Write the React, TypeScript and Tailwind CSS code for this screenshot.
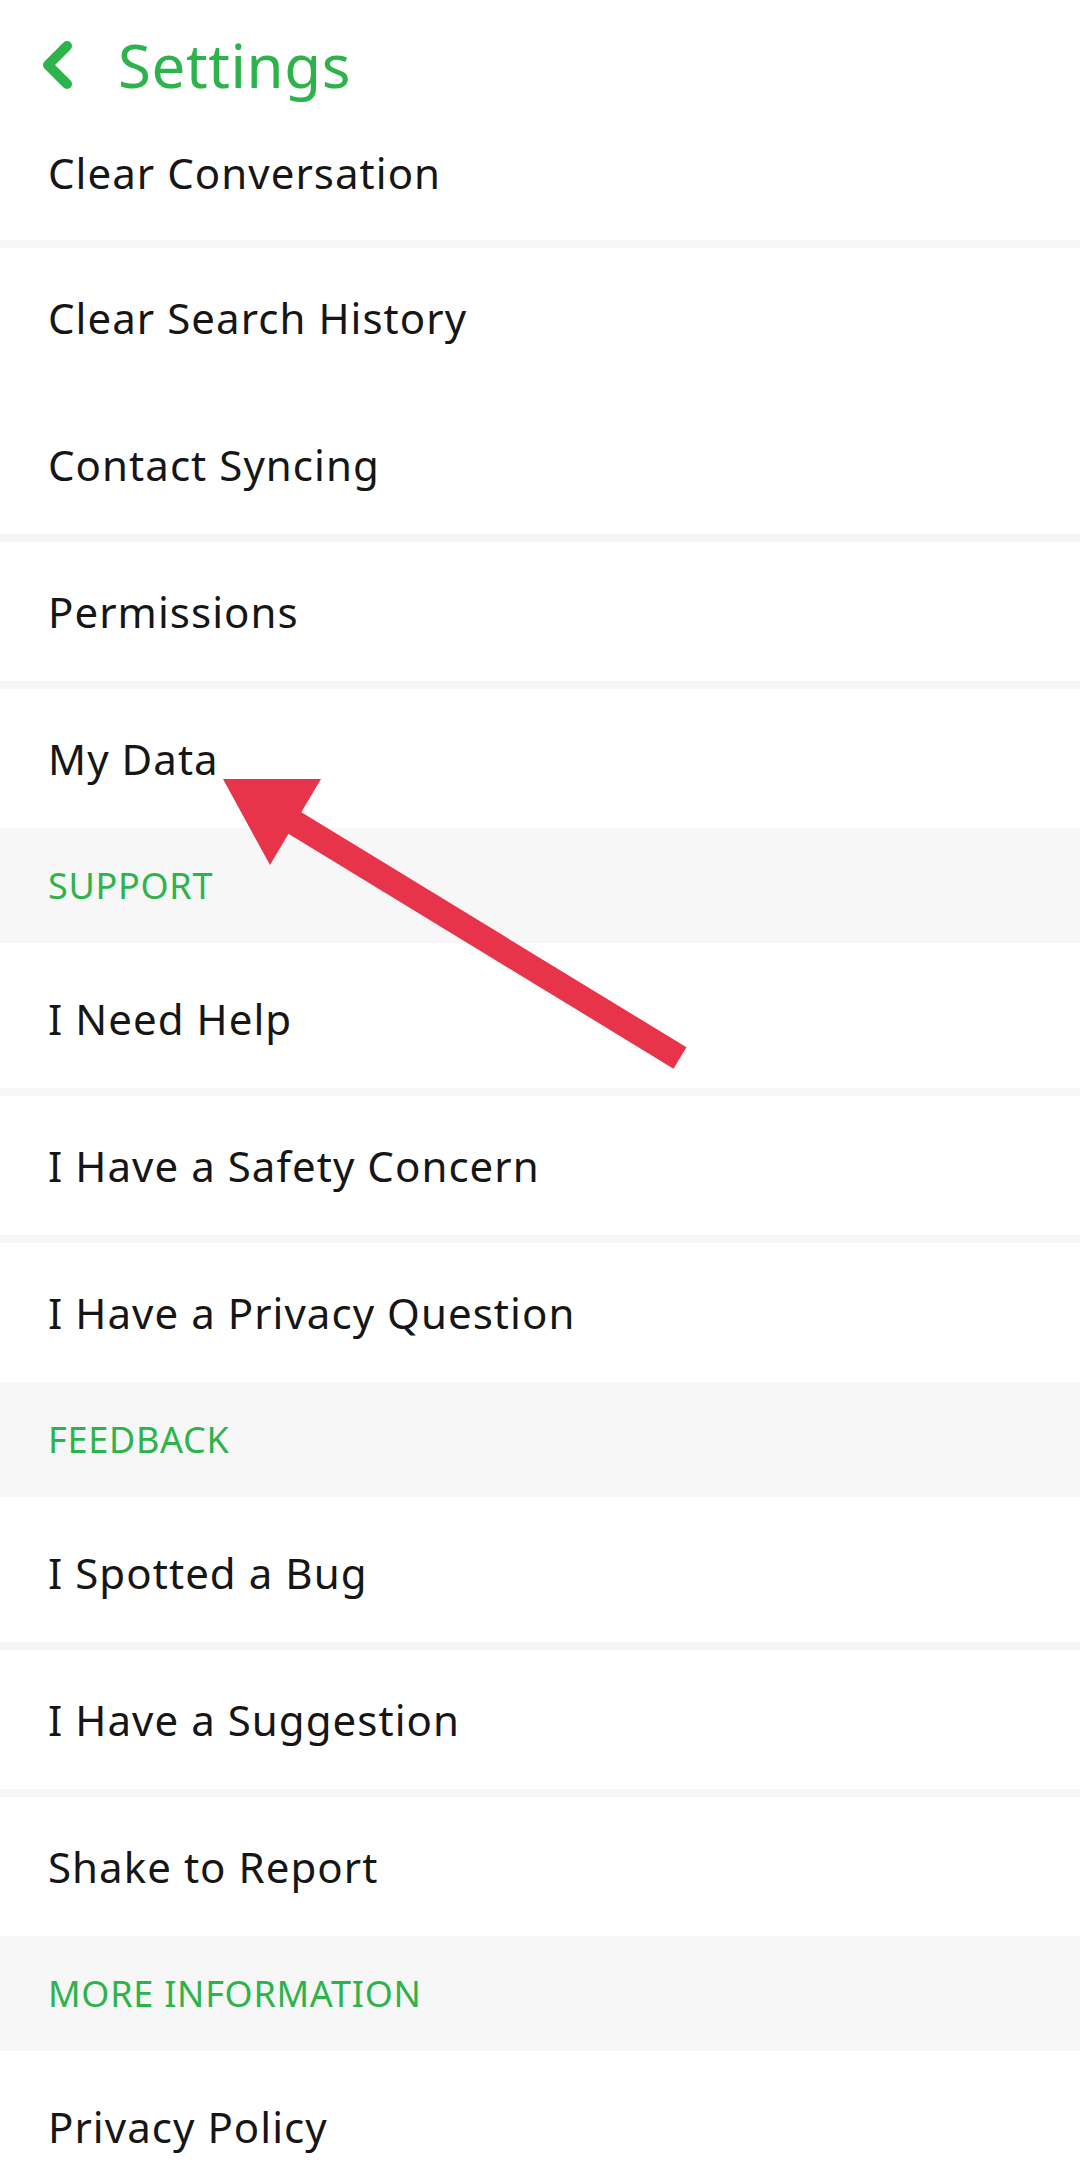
import React from 'react'

type Item = { label: string; sep?: 'gray' | 'white' | 'none' }
type Block = { title?: string; items: Item[] }

const blocks: Block[] = [
  {
    items: [
      { label: 'Clear Search History', sep: 'white' },
      { label: 'Contact Syncing' },
      { label: 'Permissions' },
      { label: 'My Data', sep: 'none' },
    ],
  },
  {
    title: 'SUPPORT',
    items: [
      { label: 'I Need Help' },
      { label: 'I Have a Safety Concern' },
      { label: 'I Have a Privacy Question', sep: 'none' },
    ],
  },
  {
    title: 'FEEDBACK',
    items: [
      { label: 'I Spotted a Bug' },
      { label: 'I Have a Suggestion' },
      { label: 'Shake to Report', sep: 'none' },
    ],
  },
  {
    title: 'MORE INFORMATION',
    items: [{ label: 'Privacy Policy', sep: 'none' }],
  },
]

function Row({ item }: { item: Item }) {
  const sep = item.sep ?? 'gray'
  return (
    <>
      <div className="h-[139px] flex items-center pl-[48px] text-[42px] text-[#161616] tracking-[0.025em]">
        {item.label}
      </div>
      {sep === 'gray' && <div className="h-[8px] bg-[#f6f6f6]" />}
      {sep === 'white' && <div className="h-[8px]" />}
    </>
  )
}

export default function App() {
  return (
    <div className="relative w-[1080px] h-[2175px] overflow-hidden bg-white font-['Noto_Sans',sans-serif]">
      {/* header */}
      <div className="h-[104px] flex items-center pt-[26px] pl-[40px] gap-[44px]">
        <svg width="34" height="50" viewBox="0 0 34 50" className="shrink-0">
          <path d="M27 6 L8 25 L27 44" fill="none" stroke="#2db34c" strokeWidth="10" strokeLinecap="round" strokeLinejoin="round" />
        </svg>
        <span className="text-[60px] leading-none text-[#2db34c] tracking-[0.01em]">Settings</span>
      </div>

      <div className="h-[136px] flex items-center pl-[48px] text-[42px] text-[#161616] tracking-[0.025em]">
        Clear Conversation
      </div>
      <div className="h-[8px] bg-[#f6f6f6]" />

      {blocks.map((b, i) => (
        <div key={i}>
          {b.title && (
            <>
              <div className="h-[115px] bg-[#f7f7f7] flex items-center pl-[48px] text-[36px] text-[#2db34c] tracking-[0.02em]">
                {b.title}
              </div>
              <div className="h-[6px]" />
            </>
          )}
          {b.items.map((it) => (
            <Row key={it.label} item={it} />
          ))}
        </div>
      ))}

      {/* annotation arrow */}
      <svg className="absolute top-0 left-0 pointer-events-none" width="1080" height="2175" viewBox="0 0 1080 2175">
        <line x1="290" y1="820" x2="680" y2="1058" stroke="#e8344a" strokeWidth="25" />
        <polygon points="223,779 321,779 270,865" fill="#e8344a" />
      </svg>
    </div>
  )
}
